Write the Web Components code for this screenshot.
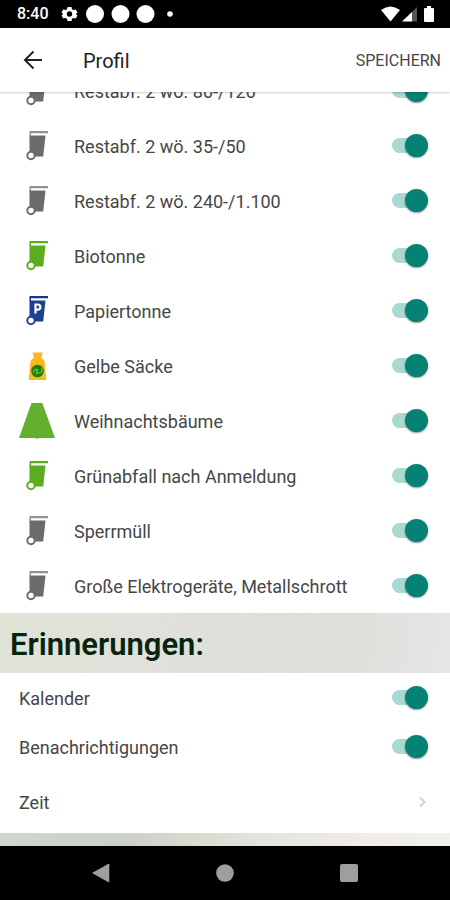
<!DOCTYPE html>
<html lang="de">
<head>
<meta charset="utf-8">
<meta name="viewport" content="width=device-width, initial-scale=1">
<title>Profil</title>
<style>
  html, body { height: 100%; margin: 0; }
  body { font-family: Roboto, "Liberation Sans", sans-serif; color: #222; background: #fff; --row-text: #464646; }
</style>
</head>
<body>
<profile-app></profile-app>

<script>
const define = (name, html, setup) => {
  const template = document.createElement('template');
  template.innerHTML = html;
  customElements.define(name, class extends HTMLElement {
    constructor() {
      super();
      this.attachShadow({ mode: 'open' }).append(template.content.cloneNode(true));
    }
    connectedCallback() { if (setup) setup(this, this.shadowRoot); }
  });
};

define('status-bar', `
  <style>
    :host { display: flex; align-items: center; justify-content: space-between; flex: none; height: 28px;
      padding: 0 14px 0 17px; background: #000; color: #fff; font-size: 16px; font-weight: 500; line-height: 20px; }
    div { display: flex; align-items: center; }
    svg { display: block; fill: #fff; }
    .left { gap: 12px; }
    .right { gap: 2px; }
  </style>
  <div class="left">
    <span>8:40</span>
    <svg width="112" height="20" viewBox="0 0 112 20" aria-hidden="true">
      <path fill-rule="evenodd" d="M6.500 3h4l.5 2.200 1.500.9 2.200-.7 1.800 3-1.600 1.600 1.600 1.600-1.800 3-2.200-.7-1.500.9-.5 2.200h-4L6 14.800l-1.500-.9-2.200.7-1.800-3L2.100 10 .5 8.400l1.800-3 2.200.7L6 5.200zM8.500 7.300a2.700 2.700 0 1 0 0 5.400 2.700 2.700 0 0 0 0-5.400z"/>
      <circle cx="34" cy="10" r="9"/><circle cx="59.500" cy="10" r="9"/><circle cx="84.500" cy="10" r="9"/>
      <circle cx="109" cy="10" r="2.800"/>
    </svg>
  </div>
  <div class="right">
    <svg width="19" height="16" viewBox="0 0 19 16" aria-hidden="true"><path d="M0 4Q9.500-3 19 4L9.500 15.500z"/></svg>
    <svg width="16" height="16" viewBox="0 0 16 16" aria-hidden="true"><path fill="#555" d="M10 6l5-5v14.500h-5z"/><path d="M0 15.500 10 6v9.500z"/></svg>
    <svg width="16" height="16" viewBox="0 0 16 16" aria-hidden="true"><path d="M7 0h4v2h2q1 0 1 1v12q0 1-1 1H5q-1 0-1-1V3q0-1 1-1h2z"/></svg>
  </div>`);

define('app-bar', `
  <style>
    :host { display: flex; align-items: center; flex: none; height: 64px; padding: 0 9px 0 20px;
      background: #fff; box-shadow: 0 1px 2px #0003; z-index: 1; }
    button { all: unset; cursor: pointer; }
    .back { width: 24px; height: 24px; margin-right: 39px; }
    svg { display: block; fill: none; stroke: #222; stroke-width: 2; }
    h1 { flex: 1; margin: 0; padding-top: 1px; font-size: 20px; font-weight: 400; line-height: 24px; }
    .save { padding-top: 2px; font-size: 16px; font-weight: 400; line-height: 20px; color: var(--row-text); text-transform: uppercase; }
  </style>
  <button class="back" aria-label="Zurück">
    <svg width="24" height="24" viewBox="0 0 24 24"><path d="M22 12H5M13.500 3.500 5 12l8.500 8.500"/></svg>
  </button>
  <h1><slot></slot></h1>
  <button class="save">Speichern</button>`);

const bin = (color, rim, extra = '') => `
  <svg width="38" height="38" viewBox="0 0 38 38">
    <path fill="${rim}" d="M11.500 4H30v2.200H13v3H11.500z"/>
    <path fill="${color}" d="M11.500 8.500H27.500L25.200 29.500H15L11.500 26z"/>
    ${extra}
    <circle cx="13" cy="28.500" r="3.700" fill="#fff" stroke="${color}" stroke-width="2"/>
  </svg>`;
const icons = {
  grey: bin('#6b6b6b', '#929292'),
  green: bin('#5bad20', '#5bad20'),
  paper: bin('#1c4192', '#17358a', '<path fill="none" stroke="#fff" stroke-width="2.200" d="M17.500 21.500V12.500h2.300a2.600 2.600 0 0 1 0 5.200h-2.300"/>'),
  sack: `
  <svg width="38" height="38" viewBox="0 0 38 38">
    <path fill="#fbb71b" d="M14.500 5.500h10.300l-1.500 5.500c2.500 1 3.200 2.500 3.400 5L28.300 33H10.700l1.600-17c.2-2.500 1-4 3.600-5z"/>
    <circle cx="19.500" cy="24" r="6.300" fill="#17800f"/>
    <path fill="none" stroke="#75bd20" stroke-width="1.300" d="M15.500 25.500q1-4 4-3l-1 4 5-1.500.8-5"/>
  </svg>`,
  tree: `
  <svg width="38" height="38" viewBox="0 0 38 38">
    <path fill="#62b02c" d="M13.500 1h10.800L37 36H20.500a2 2 0 0 1-3 0H1z"/>
  </svg>`
};
define('waste-icon', `
  <style>:host { display: block; width: 38px; height: 38px; } svg { display: block; }</style>
  <span aria-hidden="true"></span>`,
  (host, root) => { root.querySelector('span').innerHTML = icons[host.getAttribute('kind')]; });

define('toggle-row', `
  <style>
    :host { display: block; height: 55px; }
    :host([compact]) { height: 49px; }
    label { display: flex; align-items: center; height: 100%; padding: 0 22px 0 18px; cursor: pointer;
      font-size: 18px; line-height: 24px; color: var(--row-text); }
    :host([compact]) label { padding-left: 19px; }
    ::slotted(waste-icon) { flex: none; margin-right: 18px; }
    .text { flex: 1; padding-top: 2px; }
    input { appearance: none; display: flex; align-items: center; flex: none; width: 36px; height: 15px;
      margin: 0; border-radius: 8px; background: #a9d9d0; cursor: pointer; }
    input::before { content: ""; width: 23px; height: 23px; border-radius: 50%; background: #fafafa; box-shadow: 0 1px 2px #0006; }
    input:checked { justify-content: flex-end; }
    input:checked::before { background: #058274; }
    input:not(:checked) { background: #bbb; }
  </style>
  <label><slot name="icon"></slot><span class="text"><slot></slot></span><input type="checkbox" role="switch" checked></label>`);

define('section-title', `
  <style>
    :host { display: flex; align-items: center; height: 60px; padding: 0 10px;
      background: linear-gradient(100deg, #e0e4d6 0%, #e1e1da 22%, #e1dfdc 42%, #dfdfda 62%, #e0dfdc 80%, #e8e6e5 100%); }
    h2 { margin: 0; padding-top: 3px; color: #06240f; font-size: 31px; font-weight: 600; line-height: 36px; }
  </style>
  <h2><slot></slot></h2>`);

define('link-row', `
  <style>
    :host { display: block; height: 62px; }
    a { display: flex; align-items: center; justify-content: space-between; height: 100%; padding: 0 22px 0 19px;
      color: var(--row-text); text-decoration: none; font-size: 18px; line-height: 24px; }
    span { padding-top: 2px; }
    svg { fill: none; stroke: #d0d0d0; stroke-width: 2; }
  </style>
  <a href="#zeit"><span><slot></slot></span><svg width="10" height="12" viewBox="0 0 10 12" aria-hidden="true"><path d="M2 1.500 6.500 6 2 10.500"/></svg></a>`);

define('nav-bar', `
  <style>
    :host { display: grid; grid-template-columns: repeat(3, 124px); justify-content: center; align-items: center;
      flex: none; height: 54px; background: #000; }
    button { all: unset; display: grid; place-items: center; cursor: pointer; }
    svg { display: block; fill: #9e9e9e; }
  </style>
  <button aria-label="Zurück"><svg width="20" height="20" viewBox="0 0 20 20"><path d="M1 10 17.500.8q.8-.3.800.5v17.400q0 .8-.8.500z"/></svg></button>
  <button aria-label="Startbildschirm"><svg width="20" height="20" viewBox="0 0 20 20"><circle cx="10" cy="10" r="8.800"/></svg></button>
  <button aria-label="Letzte Apps"><svg width="20" height="20" viewBox="0 0 20 20"><rect x="1" y="1" width="18" height="18" rx="2"/></svg></button>`);

define('profile-app', `
  <style>
    :host { display: flex; flex-direction: column; height: 100vh; }
    main { flex: 1; min-height: 0; overflow-y: auto; scrollbar-width: none; }
    footer { height: 13px; background: linear-gradient(90deg, #d0d5ce 0%, #cbd0c8 28%, #dadad0 44%, #e7e5e0 62%, #eeece4 80%, #f2f0eb 100%); }
  </style>
  <status-bar></status-bar>
  <app-bar>Profil</app-bar>
  <main>
    <toggle-row><waste-icon slot="icon" kind="grey"></waste-icon>Restabf. 2 wö. 80-/120</toggle-row>
    <toggle-row><waste-icon slot="icon" kind="grey"></waste-icon>Restabf. 2 wö. 35-/50</toggle-row>
    <toggle-row><waste-icon slot="icon" kind="grey"></waste-icon>Restabf. 2 wö. 240-/1.100</toggle-row>
    <toggle-row><waste-icon slot="icon" kind="green"></waste-icon>Biotonne</toggle-row>
    <toggle-row><waste-icon slot="icon" kind="paper"></waste-icon>Papiertonne</toggle-row>
    <toggle-row><waste-icon slot="icon" kind="sack"></waste-icon>Gelbe Säcke</toggle-row>
    <toggle-row><waste-icon slot="icon" kind="tree"></waste-icon>Weihnachtsbäume</toggle-row>
    <toggle-row><waste-icon slot="icon" kind="green"></waste-icon>Grünabfall nach Anmeldung</toggle-row>
    <toggle-row><waste-icon slot="icon" kind="grey"></waste-icon>Sperrmüll</toggle-row>
    <toggle-row><waste-icon slot="icon" kind="grey"></waste-icon>Große Elektrogeräte, Metallschrott</toggle-row>
    <section-title>Erinnerungen:</section-title>
    <toggle-row compact>Kalender</toggle-row>
    <toggle-row compact>Benachrichtigungen</toggle-row>
    <link-row>Zeit</link-row>
    <footer></footer>
  </main>
  <nav-bar></nav-bar>`,
  (host, root) => {
    const main = root.querySelector('main');
    main.scrollTop = main.scrollHeight;
  });
</script>
</body>
</html>
